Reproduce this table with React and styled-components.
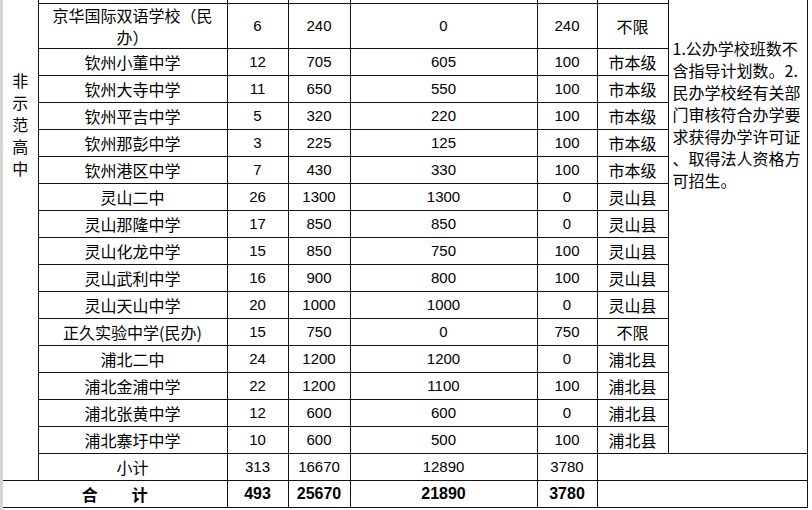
import React from "react";
import styled, { createGlobalStyle } from "styled-components";

const GlobalStyle = createGlobalStyle`
  html, body {
    margin: 0;
    padding: 0;
    background: #fff;
  }
  body {
    font-family: "Noto Sans CJK SC", sans-serif;
    color: #000;
  }
`;

const Page = styled.div`
  display: flex;
  width: 812px;
  height: 510px;
  overflow: hidden;
  background: #fff;
`;

const Gutter = styled.div`
  flex: 0 0 3px;
  background: #d4d4d4;
`;

const Sheet = styled.table`
  flex: 0 0 804px;
  width: 804px;
  table-layout: fixed;
  border-collapse: collapse;
  align-self: flex-start;
`;

const Row = styled.tr`
  height: ${({ $h }) => $h}px;
`;

const Cell = styled.td`
  padding: 0;
  border: 1px solid #111;
  text-align: center;
  vertical-align: middle;
  white-space: nowrap;
  overflow: hidden;
  font-size: ${({ $num }) => ($num ? "15px" : "16px")};
  line-height: 20px;
  font-family: ${({ $num }) =>
    $num ? '"Liberation Sans", "Noto Sans CJK SC", sans-serif' : '"Noto Sans CJK SC", sans-serif'};
  font-weight: ${({ $bold }) => ($bold ? 700 : 400)};
  ${({ $bold, $num }) => ($bold && $num ? "font-size: 16px;" : "")}
  ${({ $first }) => ($first ? "border-left: none;" : "")}
  ${({ $cut }) => ($cut ? "border-top: none; line-height: 0; font-size: 0;" : "")}
`;

const SideCell = styled(Cell)`
  border-top: none;
  border-left: none;
  vertical-align: top;
  padding-top: 73px;
`;

const SideLabel = styled.span`
  display: inline-block;
  writing-mode: vertical-rl;
  letter-spacing: 6px;
  font-size: 16px;
  line-height: 16px;
`;

const NoteCell = styled(Cell)`
  border-top: none;
  vertical-align: top;
  text-align: left;
  white-space: normal;
  line-break: anywhere;
  padding: 37px 4px 0 4px;
  line-height: 22px;
`;

const WrapCell = styled(Cell)`
  overflow: visible;
  line-height: 22px;
`;

const Spread = styled.span`
  display: inline-flex;
  gap: 34px;
`;

const schools = [
  ["钦州小董中学", 12, 705, 605, 100, "市本级"],
  ["钦州大寺中学", 11, 650, 550, 100, "市本级"],
  ["钦州平吉中学", 5, 320, 220, 100, "市本级"],
  ["钦州那彭中学", 3, 225, 125, 100, "市本级"],
  ["钦州港区中学", 7, 430, 330, 100, "市本级"],
  ["灵山二中", 26, 1300, 1300, 0, "灵山县"],
  ["灵山那隆中学", 17, 850, 850, 0, "灵山县"],
  ["灵山化龙中学", 15, 850, 750, 100, "灵山县"],
  ["灵山武利中学", 16, 900, 800, 100, "灵山县"],
  ["灵山天山中学", 20, 1000, 1000, 0, "灵山县"],
  ["正久实验中学(民办)", 15, 750, 0, 750, "不限"],
  ["浦北二中", 24, 1200, 1200, 0, "浦北县"],
  ["浦北金浦中学", 22, 1200, 1100, 100, "浦北县"],
  ["浦北张黄中学", 12, 600, 600, 0, "浦北县"],
  ["浦北寨圩中学", 10, 600, 500, 100, "浦北县"],
];

const widths = [35, 189, 61, 62, 187, 60, 71, 139];

const App = () => {
  return (
    <>
      <GlobalStyle />
      <Page>
        <Gutter />
        <Sheet>
          <colgroup>
            {widths.map((w, i) => (
              <col key={i} style={{ width: w }} />
            ))}
          </colgroup>
          <tbody>
            <Row $h={3}>
              <SideCell rowSpan={18}>
                <SideLabel>非示范高中</SideLabel>
              </SideCell>
              <Cell $cut />
              <Cell $cut />
              <Cell $cut />
              <Cell $cut />
              <Cell $cut />
              <Cell $cut />
              <NoteCell rowSpan={17}>
                1.公办学校班数不含指导计划数。2.民办学校经有关部门审核符合办学要求获得办学许可证、取得法人资格方可招生。
              </NoteCell>
            </Row>
            <Row $h={45}>
              <WrapCell>
                京华国际双语学校（民
                <br />
                办）
              </WrapCell>
              <Cell $num>6</Cell>
              <Cell $num>240</Cell>
              <Cell $num>0</Cell>
              <Cell $num>240</Cell>
              <Cell>不限</Cell>
            </Row>
            {schools.map(([name, cls, plan, pub, priv, area]) => (
              <Row $h={27} key={name}>
                <Cell>{name}</Cell>
                <Cell $num>{cls}</Cell>
                <Cell $num>{plan}</Cell>
                <Cell $num>{pub}</Cell>
                <Cell $num>{priv}</Cell>
                <Cell>{area}</Cell>
              </Row>
            ))}
            <Row $h={27}>
              <Cell>小计</Cell>
              <Cell $num>313</Cell>
              <Cell $num>16670</Cell>
              <Cell $num>12890</Cell>
              <Cell $num>3780</Cell>
              <Cell colSpan={2} />
            </Row>
            <Row $h={27}>
              <Cell colSpan={2} $first $bold>
                <Spread>
                  <span>合</span>
                  <span>计</span>
                </Spread>
              </Cell>
              <Cell $num $bold>493</Cell>
              <Cell $num $bold>25670</Cell>
              <Cell $num $bold>21890</Cell>
              <Cell $num $bold>3780</Cell>
              <Cell colSpan={2} />
            </Row>
          </tbody>
        </Sheet>
      </Page>
    </>
  );
};

export default App;
